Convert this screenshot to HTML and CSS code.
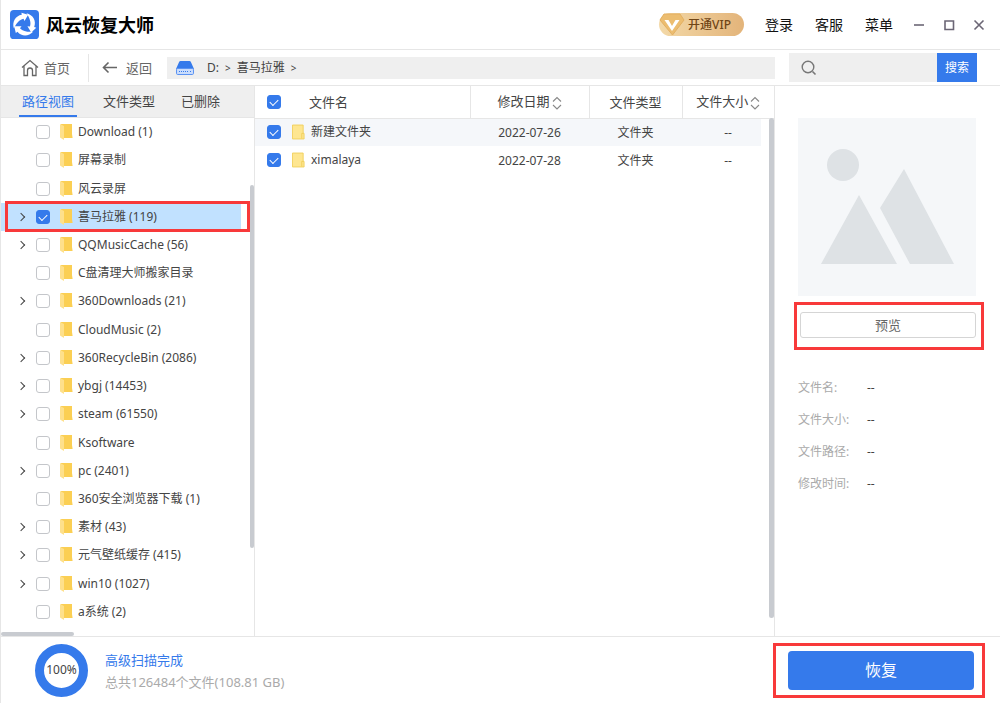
FILE: index.html
```html
<!DOCTYPE html>
<html lang="zh-CN">
<head>
<meta charset="utf-8">
<meta name="viewport" content="width=device-width, initial-scale=1">
<title>风云恢复大师</title>
<link rel="stylesheet" href="styles.css">
</head>
<body>
<svg class="sprite" aria-hidden="true">
  <symbol id="folder" viewBox="0 0 14 18"><path d="M2 1h11v10l.6 4H3z" fill="#fbcf53"/><path d="M1 1l4 2v14L1 14.500z" fill="#fee08b"/></symbol>
  <symbol id="sheet" viewBox="0 0 14 16"><path d="M.5.5h11.500v9h1v6H.5z" fill="#fee690" stroke="#f1cf5c"/><path d="M10.500 15V9.500h2" fill="none" stroke="#f1cf5c"/></symbol>
  <symbol id="sort" viewBox="0 0 10 16"><path d="M1 6.500l4-4 4 4M1 10l4 4 4-4" fill="none" stroke="#888" stroke-width="1.100"/></symbol>
</svg>
<div class="app">
  <header class="titlebar">
    <svg class="logo" viewBox="0 0 30 30"><rect width="30" height="30" rx="4" fill="#357aeb"/><g fill="#fff"><path id="arc" d="M4 19C2 12.500 5.500 6 12.200 5L11.800 2.800 18.800 4.800 15 11.500 14 9C9.500 10 6.800 13.500 4 19z"/><use href="#arc" transform="rotate(120 15 15)"/><use href="#arc" transform="rotate(240 15 15)"/></g></svg>
    <h1 class="brand">风云恢复大师</h1>
    <button class="vip" type="button">
      <svg class="vip-gem" viewBox="0 0 26 23"><path d="M5 1h16l4 6-11.500 15L1 7z" fill="#ecbd70" stroke="#e3b062"/><path d="M5.500 7h4l3.500 6 3.500-6h4L13 18z" fill="#fff"/></svg>
      <span>开通VIP</span>
    </button>
    <nav class="menu">
      <button type="button">登录</button>
      <button type="button">客服</button>
      <button type="button">菜单</button>
    </nav>
    <div class="window-buttons">
      <button type="button" aria-label="最小化"><svg viewBox="0 0 12 12"><path d="M1 6h10" stroke="#6b6675" stroke-width="1.600"/></svg></button>
      <button type="button" aria-label="最大化"><svg viewBox="0 0 12 12"><path d="M2 2h8.500v8.500H2z" fill="none" stroke="#6b6675" stroke-width="1.600"/></svg></button>
      <button type="button" aria-label="关闭"><svg viewBox="0 0 12 12"><path d="M1.500 1.500l9 9m0-9l-9 9" stroke="#6b6675" stroke-width="1.600"/></svg></button>
    </div>
  </header>

  <div class="toolbar">
    <button class="tool home" type="button"><svg viewBox="0 0 18 18"><path d="M1 8.500L9 1.500l8 7M3 7v9.500h3.500V11.500a2.500 2.500 0 0 1 5 0v5H15V7" fill="none" stroke="#666" stroke-width="1.300"/></svg>首页</button>
    <button class="tool back" type="button"><svg viewBox="0 0 16 16"><path d="M1.500 7.500H15M6.500 2.500l-5 5 5 5" fill="none" stroke="#666" stroke-width="1.600"/></svg>返回</button>
    <div class="path">
      <svg class="drive" viewBox="0 0 18 14"><path d="M4.500 0h9q1 0 1.400 1L18 8H0L3.100 1Q3.500 0 4.500 0z" fill="#357aeb"/><rect x=".5" y="7.500" width="17" height="6" rx="1.200" fill="#c9dcfc" stroke="#5b93f2"/><path d="M3 10.500h9M14 10.500h1.500" stroke="#357aeb" stroke-dasharray="1 1"/></svg>
      <span>D:</span><span class="sep">&gt;</span><span>喜马拉雅</span><span class="sep">&gt;</span>
    </div>
    <form class="search">
      <svg viewBox="0 0 16 16"><circle cx="7" cy="7" r="5.800" fill="none" stroke="#777" stroke-width="1.400"/><path d="M11.500 11.500l3 3" stroke="#777" stroke-width="1.600"/></svg>
      <input type="text" aria-label="搜索">
      <button type="button">搜索</button>
    </form>
  </div>

  <main class="main">
    <aside class="sidebar">
      <div class="tabs" role="tablist">
        <button class="tab active" type="button" role="tab" aria-selected="true">路径视图</button>
        <button class="tab" type="button" role="tab">文件类型</button>
        <button class="tab" type="button" role="tab">已删除</button>
      </div>
      <div class="tree-pane">
        <ul class="tree">
          <li><label><input type="checkbox"><svg><use href="#folder"/></svg>Download (1)</label></li>
          <li><label><input type="checkbox"><svg><use href="#folder"/></svg>屏幕录制</label></li>
          <li><label><input type="checkbox"><svg><use href="#folder"/></svg>风云录屏</label></li>
          <li class="parent selected"><label><input type="checkbox" checked><svg><use href="#folder"/></svg>喜马拉雅 (119)</label></li>
          <li class="parent"><label><input type="checkbox"><svg><use href="#folder"/></svg>QQMusicCache (56)</label></li>
          <li><label><input type="checkbox"><svg><use href="#folder"/></svg>C盘清理大师搬家目录</label></li>
          <li class="parent"><label><input type="checkbox"><svg><use href="#folder"/></svg>360Downloads (21)</label></li>
          <li><label><input type="checkbox"><svg><use href="#folder"/></svg>CloudMusic (2)</label></li>
          <li class="parent"><label><input type="checkbox"><svg><use href="#folder"/></svg>360RecycleBin (2086)</label></li>
          <li class="parent"><label><input type="checkbox"><svg><use href="#folder"/></svg>ybgj (14453)</label></li>
          <li class="parent"><label><input type="checkbox"><svg><use href="#folder"/></svg>steam (61550)</label></li>
          <li><label><input type="checkbox"><svg><use href="#folder"/></svg>Ksoftware</label></li>
          <li class="parent"><label><input type="checkbox"><svg><use href="#folder"/></svg>pc (2401)</label></li>
          <li><label><input type="checkbox"><svg><use href="#folder"/></svg>360安全浏览器下载 (1)</label></li>
          <li class="parent"><label><input type="checkbox"><svg><use href="#folder"/></svg>素材 (43)</label></li>
          <li class="parent"><label><input type="checkbox"><svg><use href="#folder"/></svg>元气壁纸缓存 (415)</label></li>
          <li class="parent"><label><input type="checkbox"><svg><use href="#folder"/></svg>win10 (1027)</label></li>
          <li><label><input type="checkbox"><svg><use href="#folder"/></svg>a系统 (2)</label></li>
        </ul>
        <div class="thumb tree-thumb"></div>
        <div class="thumb tree-thumb-x"></div>
      </div>
    </aside>

    <section class="files">
      <table class="table">
        <colgroup><col class="c-check"><col><col class="c-date"><col class="c-type"><col class="c-size"></colgroup>
        <thead>
          <tr><th><input type="checkbox" checked aria-label="全选"></th><th class="name">文件名</th><th>修改日期<svg class="sort"><use href="#sort"/></svg></th><th>文件类型</th><th>文件大小<svg class="sort"><use href="#sort"/></svg></th></tr>
        </thead>
        <tbody>
          <tr class="striped"><td><input id="f1" type="checkbox" checked></td><td class="name"><label for="f1"><svg><use href="#sheet"/></svg>新建文件夹</label></td><td>2022-07-26</td><td>文件夹</td><td>--</td></tr>
          <tr><td><input id="f2" type="checkbox" checked></td><td class="name"><label for="f2"><svg><use href="#sheet"/></svg>ximalaya</label></td><td>2022-07-28</td><td>文件夹</td><td>--</td></tr>
        </tbody>
      </table>
      <div class="thumb files-thumb"></div>
    </section>

    <aside class="details">
      <svg class="placeholder" viewBox="0 0 178 178"><rect width="178" height="178" fill="#f5f7f9"/><g fill="#dee2e5"><circle cx="45" cy="47" r="16"/><path d="M61 77l38 69H23zM106 51l50 95h-44L82 90z"/></g></svg>
      <div class="preview-mark"><button type="button">预览</button></div>
      <dl class="info">
        <dt>文件名:</dt><dd>--</dd>
        <dt>文件大小:</dt><dd>--</dd>
        <dt>文件路径:</dt><dd>--</dd>
        <dt>修改时间:</dt><dd>--</dd>
      </dl>
    </aside>
  </main>

  <footer class="footer">
    <div class="ring">100%</div>
    <div class="status">
      <p class="status-title">高级扫描完成</p>
      <p class="status-sub">总共126484个文件(108.81 GB)</p>
    </div>
    <div class="restore-mark"><button type="button">恢复</button></div>
  </footer>
</div>
</body>
</html>
```
FILE: styles.css
```css
*, ::before, ::after { box-sizing: border-box; }
body, h1, p, ul, dl, dd { margin: 0; padding: 0; }
body {
  font: 12px/16px "Noto Sans", "Noto Sans CJK SC", sans-serif;
  color: #444;
  background: #fff;
}
button {
  font: inherit;
  color: inherit;
  border: 0;
  padding: 0;
  background: none;
  white-space: nowrap;
}
svg { display: block; flex: none; }
.sprite { position: absolute; width: 0; height: 0; }

.app {
  display: flex;
  flex-direction: column;
  min-height: 100vh;
  border-left: 1px solid #e6e6e6;
}

/* Title bar */
.titlebar {
  display: flex;
  align-items: center;
  height: 50px;
  padding: 0 15px 0 9px;
  border-bottom: 1px solid #e6e6e6;
}
.logo { width: 29px; height: 29px; }
.brand {
  margin-left: 7px;
  font-size: 18px;
  line-height: 24px;
  font-weight: 700;
  color: #000;
}
.vip {
  display: flex;
  align-items: center;
  gap: 3px;
  height: 23px;
  margin-left: auto;
  padding-right: 13px;
  border-radius: 12px;
  font-weight: 500;
  color: #6f4516;
  background: linear-gradient(90deg, #f3d9a8, #e3b47a);
}
.vip-gem { width: 26px; height: 23px; }
.menu {
  display: flex;
  gap: 22px;
  margin-left: 21px;
  font-size: 14px;
  color: #111;
}
.window-buttons { display: flex; gap: 18px; margin-left: 20px; }
.window-buttons svg { width: 12px; height: 12px; }

/* Toolbar */
.toolbar {
  display: flex;
  align-items: center;
  height: 36px;
  padding-right: 23px;
  border-bottom: 1px solid #e6e6e6;
}
.tool {
  display: flex;
  align-items: center;
  height: 28px;
  font-size: 13px;
  color: #666;
}
.home { gap: 5px; padding: 0 18px 0 20px; border-right: 1px solid #e6e6e6; }
.home svg { width: 18px; height: 18px; }
.back { gap: 8px; padding: 0 15px 0 13px; }
.back svg { width: 16px; height: 16px; }
.path {
  display: flex;
  flex: 1;
  align-items: center;
  gap: 6px;
  height: 22px;
  padding-left: 9px;
  background: #efefef;
}
.drive { width: 18px; height: 14px; margin-right: 7px; }
.sep { font-size: 10px; }
.search {
  display: flex;
  align-items: center;
  width: 188px;
  height: 29px;
  margin-left: 14px;
  padding-left: 12px;
  background: #efefef;
}
.search svg { width: 16px; height: 16px; }
.search input {
  flex: 1;
  min-width: 0;
  border: 0;
  outline: 0;
  background: none;
  font: inherit;
}
.search button {
  width: 40px;
  height: 29px;
  color: #fff;
  background: #357aeb;
}

/* Check boxes */
input[type="checkbox"] {
  appearance: none;
  flex: none;
  width: 14px;
  height: 14px;
  margin: 0;
  border: 1px solid #c4c6ca;
  border-radius: 3px;
  background: #fff;
}
input[type="checkbox"]:checked {
  border-color: #357aeb;
  background: #357aeb;
}
input[type="checkbox"]:checked::before {
  content: "";
  display: block;
  width: 8px;
  height: 5px;
  margin: 3px auto 0;
  border: solid #fff;
  border-width: 0 0 1px 1px;
  transform: rotate(-45deg);
}

.main { display: flex; flex: 1; }
.thumb { position: absolute; border-radius: 3px; background: #c8cbd0; }

/* Folder tree */
.sidebar {
  display: flex;
  flex-direction: column;
  width: 254px;
  border-right: 1px solid #e6e6e6;
}
.tabs {
  display: flex;
  gap: 26px;
  height: 32px;
  padding-left: 18px;
  border-bottom: 1px solid #e6e6e6;
  background: #efefef;
  font-size: 13px;
}
.tab.active {
  padding: 0 3px;
  border-bottom: 2px solid #357aeb;
  color: #357aeb;
}
.tab:not(.active) { padding-bottom: 2px; }
.tree-pane { position: relative; display: flex; flex: 1; padding-bottom: 10px; }
.tree {
  display: grid;
  grid-auto-rows: 1fr;
  flex: 1;
  list-style: none;
}
.tree li {
  position: relative;
  display: flex;
  align-items: center;
  min-height: 28px;
  padding-left: 35px;
}
.tree label { display: flex; align-items: center; white-space: nowrap; }
.tree svg { width: 14px; height: 18px; margin: 0 5px 0 9px; }
.parent::before {
  content: "";
  width: 6px;
  height: 6px;
  margin: 0 12px 0 -18px;
  border: solid #444;
  border-width: 1px 1px 0 0;
  transform: rotate(45deg);
}
.selected { background: linear-gradient(#c1e1ff, #c1e1ff) no-repeat 0 0 / calc(100% - 13px) 100%; }
.selected::after {
  content: "";
  position: absolute;
  inset: -2px 4px -1px 4px;
  border: 3px solid #f8393a;
  pointer-events: none;
}
.tree-thumb { top: 13%; right: 0; width: 4px; height: 70%; }
.tree-thumb-x { left: 0; bottom: 0; width: 73px; height: 4px; }

/* File list */
.files { position: relative; flex: 1; min-width: 0; border-right: 1px solid #e6e6e6; }
.table { width: 100%; table-layout: fixed; border-collapse: collapse; }
.c-check { width: 37px; }
.c-date { width: 119px; }
.c-type { width: 93px; }
.c-size { width: 92px; }
.table th, .table td { padding: 0; text-align: center; vertical-align: middle; }
.table th {
  height: 32px;
  border-bottom: 1px solid #e6e6e6;
  font-size: 13px;
  font-weight: 400;
}
.table th:nth-child(n+3) { border-left: 1px solid #e6e6e6; }
.table td { height: 28px; }
.table td:nth-child(n+3) { padding-top: 2px; }
.table input { display: block; margin: 0 auto; }
.table th.name { padding-left: 17px; text-align: left; }
.table td.name { text-align: left; }
.table label { display: flex; align-items: center; gap: 6px; }
.table label svg { width: 13px; height: 16px; }
.sort { display: inline-block; width: 10px; height: 16px; margin-left: 2px; vertical-align: middle; }
.striped { background: linear-gradient(#f5f7fa, #f5f7fa) no-repeat 0 0 / calc(100% - 13px) 100%; }
.files-thumb { top: 32px; right: 0; bottom: 18px; width: 5px; }

/* Details */
.details { width: 225px; padding: 32px 16px 0 19px; }
.placeholder { width: 178px; height: 178px; margin-left: 4px; }
.preview-mark {
  margin-top: 6px;
  padding: 7px 5px 9px 3px;
  border: 3px solid #f8393a;
}
.preview-mark button {
  display: block;
  width: 100%;
  height: 26px;
  border: 1px solid #d5d5d5;
  border-radius: 3px;
  font-size: 13px;
  color: #666;
}
.info {
  display: grid;
  grid-template-columns: 69px 1fr;
  row-gap: 16px;
  margin: 30px 0 0 4px;
}
.info dt { color: #aaa; }

/* Footer */
.footer {
  display: flex;
  align-items: center;
  height: 67px;
  padding: 0 15px 0 34px;
  border-top: 1px solid #e6e6e6;
}
.ring {
  display: grid;
  place-items: center;
  width: 53px;
  height: 53px;
  border: 9px solid #357aeb;
  border-radius: 50%;
  white-space: nowrap;
}
.status { margin-left: 17px; padding-top: 2px; font-size: 13px; line-height: 22px; }
.status-title { color: #357aeb; }
.status-sub { color: #aaa; }
.restore-mark {
  width: 212px;
  margin-left: auto;
  padding: 5px 8px 5px 12px;
  border: 3px solid #f8393a;
}
.restore-mark button {
  display: block;
  width: 100%;
  height: 39px;
  border-radius: 4px;
  font-size: 16px;
  color: #fff;
  background: #357aeb;
}
```
